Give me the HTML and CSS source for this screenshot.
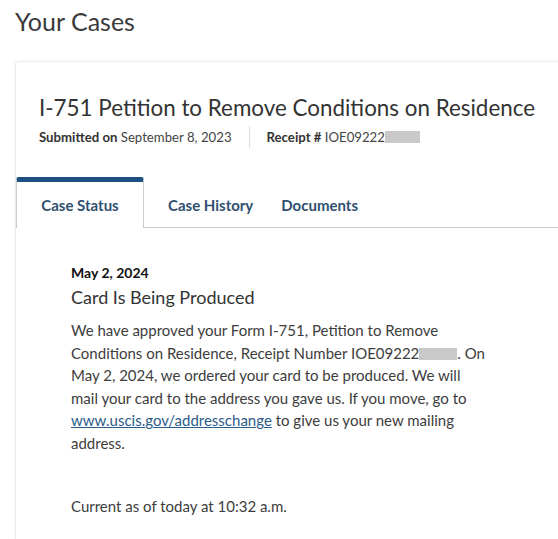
FILE: index.html
```html
<!doctype html>
<html>
<head>
<meta charset="utf-8">
<title>Your Cases</title>
<link rel="stylesheet" href="styles.css">
</head>
<body>
	<h1 class="page-title">Your Cases</h1>
	<div class="card">
		<h2 class="case-title">I-751 Petition to Remove Conditions on Residence</h2>
		<div class="meta">
			<span class="meta-item"><b>Submitted on</b> September 8, 2023</span>
			<span class="meta-sep"></span>
			<span class="meta-item"><b>Receipt #</b> IOE09222<span class="redact redact-sm"></span></span>
		</div>
		<ul class="tabs">
			<li class="tab active">Case Status</li>
			<li class="tab">Case History</li>
			<li class="tab">Documents</li>
			<li class="tab-rest"></li>
		</ul>
		<div class="status">
			<div class="status-date">May 2, 2024</div>
			<h3 class="status-title">Card Is Being Produced</h3>
			<p class="status-text">We have approved your Form I-751, Petition to Remove Conditions on Residence, Receipt Number IOE09222<span class="redact"></span>. On May 2, 2024, we ordered your card to be produced. We will mail your card to the address you gave us. If you move, go to <a href="#">www.uscis.gov/addresschange</a> to give us your new mailing address.</p>
			<p class="status-current">Current as of today at 10:32 a.m.</p>
		</div>
	</div>
</body>
</html>
```
FILE: styles.css
```css
*{ margin:0; padding:0; list-style:none; box-sizing:border-box; }
html, body{ height:100%; overflow:hidden; }
body{ font-family:"Lato","Open Sans",sans-serif; color:#3d3d3d; background:#fff; padding:0 0 0 15px; }
.page-title{ font-size:25px; font-weight:400; line-height:30px; margin-top:6px; color:#3b3b3b; }
.card{ margin-top:25px; margin-right:-20px; border:1px solid #ececec; border-bottom:none; border-radius:4px 4px 0 0; box-shadow:0 0 4px rgba(0,0,0,0.06); padding-top:32px; height:478px; }
.case-title{ font-size:22.4px; font-weight:400; color:#333; margin-left:23px; line-height:28px; }
.meta{ display:flex; align-items:center; margin:4px 0 0 23px; font-size:13.2px; color:#444; height:22px; }
.meta b{ font-weight:700; color:#333; }
.meta-sep{ width:1px; height:22px; background:#ddd; margin:0 17px; }
.redact{ display:inline-block; width:38px; height:12px; background:#c9c9c9; vertical-align:-1px; }
.redact-sm{ width:35px; }
.tabs{ display:flex; margin-top:29px; height:51px; }
.tab{ padding:19px 14px 0 14px; font-size:15px; font-weight:700; color:#2f506f; border-bottom:1px solid #ccc; }
.tab.active{ border:1px solid #ccc; border-top:5px solid #1d4f82; border-bottom:none; border-radius:3px 3px 0 0; padding:14px 0 0 0; width:128px; text-align:center; }
.tab.active + .tab{ padding-left:24px; }
.tab-rest{ flex:1; border-bottom:1px solid #ccc; }
.status{ padding:36px 0 0 55px; width:470px; }
.status-date{ font-size:14px; font-weight:700; color:#111; line-height:18px; }
.status-title{ font-size:18px; font-weight:400; color:#333; line-height:26px; margin-top:2px; }
.status-text{ font-size:15px; line-height:22.6px; color:#3d3d3d; margin-top:9px; }
.status-text a{ color:#2b5c8a; }
.status-current{ font-size:15px; line-height:22px; margin-top:40px; }
```
